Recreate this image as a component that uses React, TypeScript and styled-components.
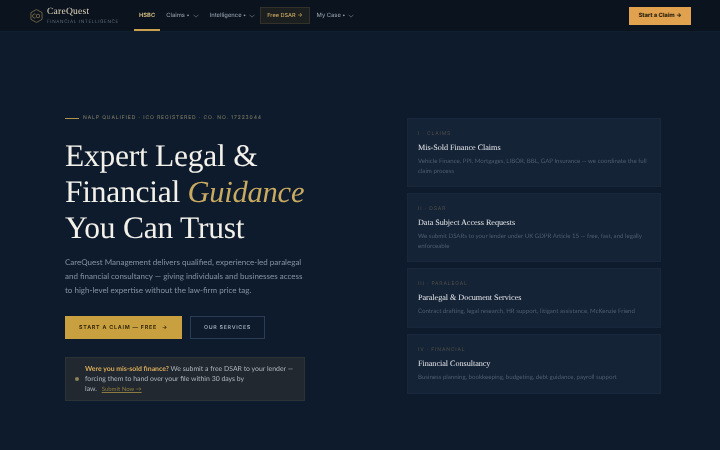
import React from "react";
import styled, { createGlobalStyle } from "styled-components";

const Global = createGlobalStyle`
  html, body { margin: 0; padding: 0; background: #0d1b2d; }
  body { font-family: Inter, "Liberation Sans", sans-serif; width: 720px; height: 450px; overflow: hidden; text-rendering: geometricPrecision; }
  * { box-sizing: border-box; }
`;
const SERIF = `"Liberation Serif", serif`;
const BODY = `Lato, "Liberation Sans", sans-serif`;

const Page = styled.div`
  width: 720px;
  height: 450px;
  background: #0d1b2d;
`;
const Nav = styled.nav`
  height: 32px;
  background: #0b131e;
  border-bottom: 1px solid #111e2d;
  display: flex;
  align-items: stretch;
  padding: 0 29px 0 30px;
`;
const Logo = styled.div`
  display: flex;
  align-items: center;
  gap: 4px;
  width: 104px;
  will-change: transform;
`;
const LogoText = styled.div`
  display: flex;
  flex-direction: column;
  gap: 2px;
`;
const LogoName = styled.span`
  font-family: ${SERIF};
  font-size: 9.6px;
  line-height: 11px;
  letter-spacing: 0.2px;
  color: #e4d9bf;
`;
const LogoSub = styled.span`
  font-size: 4.6px;
  line-height: 7px;
  letter-spacing: 0.62px;
  color: #5c6a78;
  white-space: nowrap;
`;
const Links = styled.div`
  display: flex;
  align-items: center;
  flex: 1;
  gap: 6px;
  will-change: transform;
`;
const Link = styled.div<{ $active?: boolean }>`
  height: 100%;
  display: flex;
  align-items: center;
  gap: 3px;
  padding: 2px ${(p) => (p.$active ? "5px" : "0")} 0;
  font-size: 5.8px;
  font-weight: ${(p) => (p.$active ? 600 : 500)};
  color: ${(p) => (p.$active ? "#dcc284" : "#8d99a6")};
  border-bottom: 2px solid ${(p) => (p.$active ? "#c9a050" : "transparent")};
  margin-right: ${(p) => (p.$active ? "0" : "5px")};
`;
const Dsar = styled.div`
  height: 17px;
  display: flex;
  align-items: center;
  padding: 0 6px;
  font-size: 5.6px;
  font-weight: 500;
  color: #c9a860;
  background: #1c1f20;
  border: 1px solid #33322a;
  margin: 0 1px 0 -6px;
  white-space: nowrap;
`;
const Cta = styled.div`
  align-self: center;
  height: 18px;
  display: flex;
  align-items: center;
  padding: 0 9.5px;
  font-size: 5.8px;
  font-weight: 700;
  color: #1a1408;
  background: #e0a24e;
`;
const Hero = styled.main`
  display: flex;
  justify-content: space-between;
  padding: 82px 59px 0 65px;
  will-change: transform;
`;
const Left = styled.section`
  width: 240px;
  display: flex;
  flex-direction: column;
`;
const Kicker = styled.div`
  display: flex;
  align-items: center;
  gap: 4px;
  height: 8px;
  font-size: 5px;
  letter-spacing: 0.9px;
  color: #8a8466;
  white-space: nowrap;
`;
const KickerLine = styled.i`
  width: 14px;
  height: 1px;
  background: #b3944a;
`;
const Title = styled.h1`
  margin: 16px 0 0;
  font-family: ${SERIF};
  font-weight: 400;
  font-size: 31.5px;
  letter-spacing: -0.25px;
  line-height: 36px;
  color: #f3f1ea;
  white-space: nowrap;
`;
const Accent = styled.em`
  font-size: 30.5px;
  color: #c9aa60;
`;
const Lead = styled.p`
  margin: 9px 0 0;
  font-family: ${BODY};
  font-size: 8px;
  line-height: 14px;
  color: #8592a3;
  white-space: nowrap;
`;
const Actions = styled.div`
  display: flex;
  gap: 8px;
  margin-top: 19px;
`;
const Primary = styled.div`
  width: 117px;
  height: 23px;
  display: flex;
  align-items: center;
  justify-content: center;
  gap: 5px;
  font-size: 5.4px;
  font-weight: 600;
  letter-spacing: 0.75px;
  color: #2a2008;
  background: #c9a03f;
`;
const Secondary = styled.div`
  width: 75px;
  height: 23px;
  display: flex;
  align-items: center;
  justify-content: center;
  font-size: 5.3px;
  font-weight: 600;
  letter-spacing: 0.7px;
  color: #a0abb8;
  border: 1px solid #2b3d55;
`;
const Callout = styled.div`
  margin-top: 18px;
  width: 240px;
  height: 44px;
  display: flex;
  align-items: center;
  gap: 6px;
  padding: 0 8px 0 9px;
  background: #22282f;
  border: 1px solid #2d3237;
`;
const Dot = styled.i`
  flex: none;
  width: 4px;
  height: 4px;
  border-radius: 50%;
  background: #8c8455;
`;
const CalloutText = styled.div`
  font-family: ${BODY};
  font-size: 6.9px;
  line-height: 10px;
  color: #aeb5bc;
  white-space: nowrap;
`;
const Strong = styled.b`
  color: #d9ad5c;
  font-weight: 700;
`;
const Submit = styled.span`
  margin-left: 3px;
  color: #8c7a3f;
  text-decoration: underline;
  font-size: 6px;
`;
const Right = styled.section`
  width: 254px;
  margin-top: 4px;
  display: flex;
  flex-direction: column;
  gap: 6px;
`;
const Card = styled.article<{ $h: number }>`
  height: ${(p) => p.$h}px;
  padding: 11px 10px 0;
  background: #152337;
  border: 1px solid #18273b;
`;
const CardLabel = styled.div`
  font-size: 5px;
  line-height: 8px;
  letter-spacing: 0.85px;
  color: #4e4d45;
`;
const CardTitle = styled.h3`
  margin: 4px 0 0;
  font-family: ${SERIF};
  font-weight: 400;
  font-size: 8.2px;
  letter-spacing: -0.05px;
  line-height: 12px;
  color: #e6e8ea;
  white-space: nowrap;
`;
const CardText = styled.p`
  margin: 3px 0 0;
  font-family: ${BODY};
  font-size: 6.12px;
  line-height: 10px;
  color: #4f5d70;
`;

const Chev = () => (
  <svg width="6" height="4" viewBox="0 0 6 4" fill="none" stroke="#6d7885" strokeWidth="0.7">
    <path d="M0.5 0.7 L3 3.2 L5.5 0.7" />
  </svg>
);
const Mark = () => (
  <svg width="13" height="14" viewBox="0 0 14 15" fill="none" stroke="#8c7c4e" strokeWidth="0.8">
    <path d="M7 0.6 L13 3.8 V11.2 L7 14.4 L1 11.2 V3.8 Z" />
    <path d="M6 5.6 A2.2 2.2 0 1 0 6 9.4" />
    <circle cx="8.6" cy="7.5" r="1.9" />
  </svg>
);

const cards = [
  { h: 69, label: "I · CLAIMS", title: "Mis-Sold Finance Claims", text: "Vehicle Finance, PPI, Mortgages, LIBOR, BBL, GAP Insurance — we coordinate the full claim process" },
  { h: 69, label: "II · DSAR", title: "Data Subject Access Requests", text: "We submit DSARs to your lender under UK GDPR Article 15 — free, fast, and legally enforceable" },
  { h: 60, label: "III · PARALEGAL", title: "Paralegal & Document Services", text: "Contract drafting, legal research, HR support, litigant assistance, McKenzie Friend" },
  { h: 60, label: "IV · FINANCIAL", title: "Financial Consultancy", text: "Business planning, bookkeeping, budgeting, debt guidance, payroll support" },
];

export default function App() {
  return (
    <Page>
      <Global />
      <Nav>
        <Logo>
          <Mark />
          <LogoText>
            <LogoName>CareQuest</LogoName>
            <LogoSub>FINANCIAL INTELLIGENCE</LogoSub>
          </LogoText>
        </Logo>
        <Links>
          <Link $active>HSBC</Link>
          <Link>Claims • <Chev /></Link>
          <Link>Intelligence • <Chev /></Link>
          <Dsar>Free DSAR →</Dsar>
          <Link>My Case • <Chev /></Link>
        </Links>
        <Cta>Start a Claim →</Cta>
      </Nav>
      <Hero>
        <Left>
          <Kicker><KickerLine />NALP QUALIFIED · ICO REGISTERED · CO. NO. 17223044</Kicker>
          <Title>
            Expert Legal &amp;<br />
            Financial <Accent>Guidance</Accent><br />
            You Can Trust
          </Title>
          <Lead>
            CareQuest Management delivers qualified, experience-led paralegal<br />
            and financial consultancy — giving individuals and businesses access<br />
            to high-level expertise without the law-firm price tag.
          </Lead>
          <Actions>
            <Primary>START A CLAIM — FREE <span>→</span></Primary>
            <Secondary>OUR SERVICES</Secondary>
          </Actions>
          <Callout>
            <Dot />
            <CalloutText>
              <Strong>Were you mis-sold finance?</Strong> We submit a free DSAR to your lender —<br />
              forcing them to hand over your file within 30 days by<br />
              law. <Submit>Submit Now →</Submit>
            </CalloutText>
          </Callout>
        </Left>
        <Right>
          {cards.map((c) => (
            <Card key={c.label} $h={c.h}>
              <CardLabel>{c.label}</CardLabel>
              <CardTitle>{c.title}</CardTitle>
              <CardText>{c.text}</CardText>
            </Card>
          ))}
        </Right>
      </Hero>
    </Page>
  );
}
